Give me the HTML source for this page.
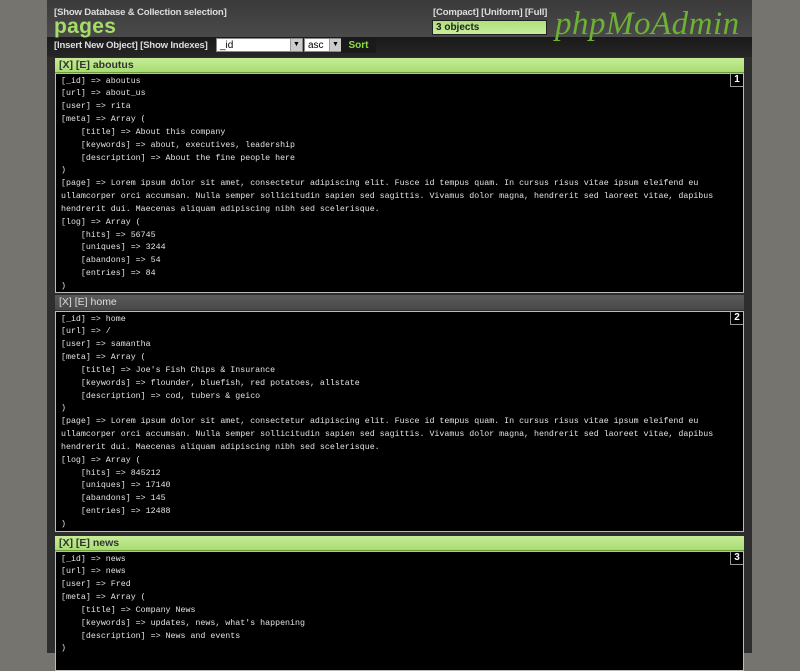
<!DOCTYPE html>
<html><head><meta charset="utf-8"><style>
html,body{margin:0;padding:0;}
body{width:800px;height:653px;background:#75746f;overflow:hidden;font-family:"Liberation Sans",sans-serif;}
#wrap{position:absolute;left:47px;top:0;width:705px;height:653px;background:#2e2e2e;}
#head{position:absolute;left:0;top:0;width:705px;height:37px;background:linear-gradient(#3a3a3a,#4a4a4a);}
#band{position:absolute;left:0;top:37px;width:705px;height:20px;background:linear-gradient(#1a1a1a,#262626);}
.lnk{position:absolute;color:#ddd;font-size:9.6px;font-weight:bold;white-space:nowrap;letter-spacing:-0.2px;}
.coll{position:absolute;left:7px;top:15px;color:#a6dd6a;font-weight:bold;font-size:21px;letter-spacing:0.3px;}
.sel{position:absolute;top:38px;height:14px;background:#fff;border:1px solid #888;font-size:10px;color:#000;line-height:13px;box-sizing:border-box;padding-left:3px;}
.arr{position:absolute;right:0;top:0;width:11px;height:12px;background:#ccc;border-left:1px solid #999;font-size:7px;text-align:center;line-height:12px;}
.sort{position:absolute;left:294px;top:38px;width:35px;height:15px;background:#1a1a1a;color:#8fdc4a;font-size:10px;font-weight:bold;text-align:center;line-height:15px;}
.cnt{position:absolute;left:385px;top:20px;background:linear-gradient(#b0e07a,#c8ec9c);border:1px solid #222;font-size:10px;font-weight:bold;color:#222;line-height:13px;padding-left:3px;box-sizing:border-box;width:115px;height:15px;}
.logo{position:absolute;left:508px;top:6px;font-family:"Liberation Serif",serif;font-style:italic;font-size:33px;color:#6db232;letter-spacing:0.5px;}
.hd{position:absolute;left:8px;width:689px;height:15px;font-size:10.5px;font-weight:bold;color:#333;line-height:15px;padding-left:4px;box-sizing:border-box;}
.g{background:linear-gradient(#c6ec98,#a9dc72);border-bottom:1px solid #6a9a3a;}
.gr{background:linear-gradient(#5a5a5a,#484848);color:#ddd;font-weight:normal;}
.box{position:absolute;left:8px;width:689px;background:#000;border:1px solid #bbb;box-sizing:border-box;}
pre{margin:0;padding:0 0 0 5px;font-family:"Liberation Mono",monospace;font-size:8.3px;line-height:12.85px;color:#e2e2e2;position:relative;top:1.5px;}
.num{position:absolute;right:0;top:0;width:12px;height:12px;border-left:1px solid #999;border-bottom:1px solid #999;color:#fff;font-size:10px;font-weight:bold;text-align:center;line-height:12px;}
</style></head><body>
<div id="wrap">
<div id="head"></div><div id="band"></div>
<div class="lnk" style="left:7px;top:7px">[Show Database &amp; Collection selection]</div>
<div class="coll">pages</div>
<div class="lnk" style="left:7px;top:40px">[Insert New Object] [Show Indexes]</div>
<div class="sel" style="left:169px;width:87px">_id<div class="arr">▼</div></div>
<div class="sel" style="left:257px;width:38px">asc<div class="arr">▼</div></div>
<div class="sort">Sort</div>
<div class="lnk" style="left:386px;top:7px">[Compact] [Uniform] [Full]</div>
<div class="cnt">3 objects</div>
<div class="logo">phpMoAdmin</div>

<div class="hd g" style="top:58px">[X] [E] aboutus</div>
<div class="box" style="top:73px;height:220px"><div class="num">1</div><pre>[_id] =&gt; aboutus
[url] =&gt; about_us
[user] =&gt; rita
[meta] =&gt; Array (
    [title] =&gt; About this company
    [keywords] =&gt; about, executives, leadership
    [description] =&gt; About the fine people here
)
[page] =&gt; Lorem ipsum dolor sit amet, consectetur adipiscing elit. Fusce id tempus quam. In cursus risus vitae ipsum eleifend eu
ullamcorper orci accumsan. Nulla semper sollicitudin sapien sed sagittis. Vivamus dolor magna, hendrerit sed laoreet vitae, dapibus
hendrerit dui. Maecenas aliquam adipiscing nibh sed scelerisque.
[log] =&gt; Array (
    [hits] =&gt; 56745
    [uniques] =&gt; 3244
    [abandons] =&gt; 54
    [entries] =&gt; 84
)</pre></div>

<div class="hd gr" style="top:295px">[X] [E] home</div>
<div class="box" style="top:311px;height:221px"><div class="num">2</div><pre>[_id] =&gt; home
[url] =&gt; /
[user] =&gt; samantha
[meta] =&gt; Array (
    [title] =&gt; Joe's Fish Chips &amp; Insurance
    [keywords] =&gt; flounder, bluefish, red potatoes, allstate
    [description] =&gt; cod, tubers &amp; geico
)
[page] =&gt; Lorem ipsum dolor sit amet, consectetur adipiscing elit. Fusce id tempus quam. In cursus risus vitae ipsum eleifend eu
ullamcorper orci accumsan. Nulla semper sollicitudin sapien sed sagittis. Vivamus dolor magna, hendrerit sed laoreet vitae, dapibus
hendrerit dui. Maecenas aliquam adipiscing nibh sed scelerisque.
[log] =&gt; Array (
    [hits] =&gt; 845212
    [uniques] =&gt; 17140
    [abandons] =&gt; 145
    [entries] =&gt; 12488
)</pre></div>

<div class="hd g" style="top:536px">[X] [E] news</div>
<div class="box" style="top:551px;height:120px"><div class="num">3</div><pre>[_id] =&gt; news
[url] =&gt; news
[user] =&gt; Fred
[meta] =&gt; Array (
    [title] =&gt; Company News
    [keywords] =&gt; updates, news, what's happening
    [description] =&gt; News and events
)</pre></div>
</div>
</body></html>
